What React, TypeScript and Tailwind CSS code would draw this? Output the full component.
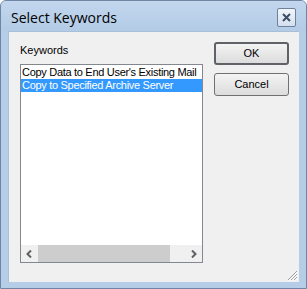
import React from "react";

export default function App() {
  const ui = { fontFamily: '"Liberation Sans", Arial, sans-serif' };
  return (
    <div className="w-[307px] h-[289px] bg-white">
      <div className="w-[307px] h-[289px] flex flex-col border border-[#6e86a3] bg-[#b5cde7] rounded-t-[6px]">
        {/* Title bar */}
        <div className="h-[30px] flex items-center pl-[10px] pr-[10px] bg-gradient-to-b from-[#c2d7ee] to-[#b3cbe6] rounded-t-[5px]">
          <span
            className="flex-1 text-[14px] text-black leading-none mt-[3px]"
            style={{ fontFamily: '"Open Sans", "Noto Sans", sans-serif' }}
          >
            Select Keywords
          </span>
          <div className="w-[19px] h-[19px] mt-[3px] border border-[#6d819c] rounded-[2px] bg-gradient-to-b from-[#f2f6fb] to-[#d3e0ef] flex items-center justify-center">
            <svg width="9" height="9" viewBox="0 0 9 9">
              <path d="M1 1 L8 8 M8 1 L1 8" stroke="#3d4e66" strokeWidth="2" />
            </svg>
          </div>
        </div>
        {/* Client area */}
        <div className="relative mx-[7px] mb-[6px] flex-1 bg-[#f0f0f0] border-l border-t border-[#a9bfd8] flex pl-[11px] pt-[10px]" style={ui}>
          <div className="flex flex-col">
            <div className="h-[13px] text-[11px] leading-[13px] text-black mt-[2px]">Keywords</div>
            <div className="mt-[7px] w-[183px] h-[199px] border border-[#828790] bg-white flex flex-col">
              <div className="flex-1 pt-[1px] overflow-hidden text-[11px] leading-[13px] tracking-[-0.3px]">
                <div className="h-[13px] pl-[1px] whitespace-nowrap text-black">Copy Data to End User's Existing Mail</div>
                <div className="h-[13px] pl-[1px] whitespace-nowrap bg-[#3399ff] text-white">Copy to Specified Archive Server</div>
              </div>
              <div className="h-[17px] flex bg-[#f0f0f0]">
                <div className="w-[17px] flex items-center justify-center">
                  <svg width="7" height="8" viewBox="0 0 7 8">
                    <path d="M5 0.5 L1.5 4 L5 7.5" stroke="#606060" strokeWidth="2" fill="none" />
                  </svg>
                </div>
                <div className="w-[132px] bg-[#cdcdcd]" />
                <div className="flex-1" />
                <div className="w-[17px] flex items-center justify-center">
                  <svg width="7" height="8" viewBox="0 0 7 8">
                    <path d="M2 0.5 L5.5 4 L2 7.5" stroke="#606060" strokeWidth="2" fill="none" />
                  </svg>
                </div>
              </div>
            </div>
          </div>
          <div className="ml-[11px] flex flex-col gap-[8px]">
            <button className="w-[75px] h-[23px] border-2 border-[#5f6368] rounded-[3px] bg-gradient-to-b from-[#f4f4f4] to-[#dcdcdc] text-[11px] text-black flex items-center justify-center">
              OK
            </button>
            <button className="w-[75px] h-[23px] border border-[#707070] rounded-[3px] bg-gradient-to-b from-[#f4f4f4] to-[#dcdcdc] text-[11px] text-black flex items-center justify-center">
              Cancel
            </button>
          </div>
          <svg className="absolute right-[1px] bottom-[1px]" width="12" height="12" viewBox="0 0 12 12">
            <path d="M11 2 L2 11 M11 5 L5 11 M11 8 L8 11" stroke="#a0a0a0" strokeWidth="1" />
            <path d="M12 3 L3 12 M12 6 L6 12 M12 9 L9 12" stroke="#ffffff" strokeWidth="1" />
          </svg>
        </div>
      </div>
    </div>
  );
}
